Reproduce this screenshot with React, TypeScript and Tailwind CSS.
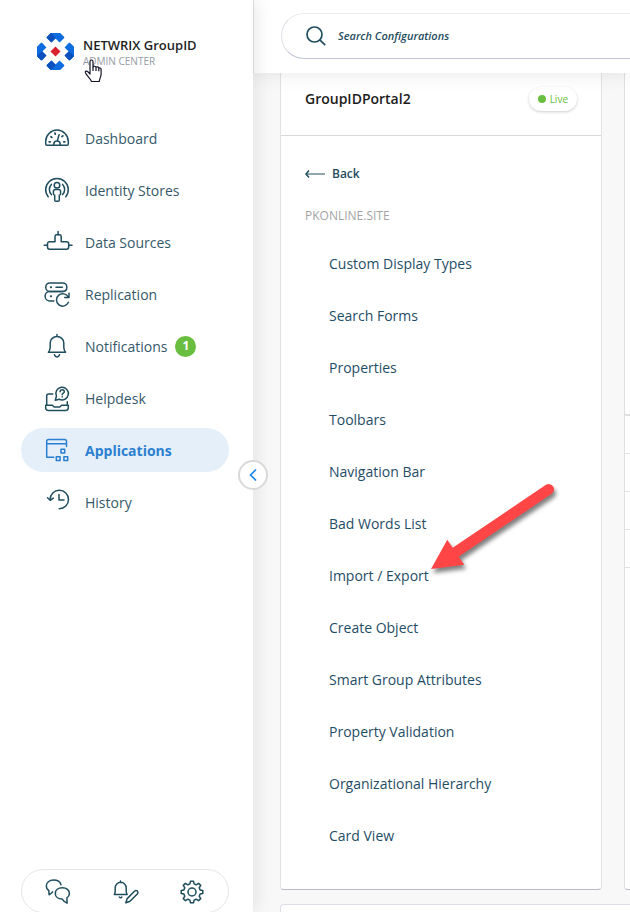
import type { ReactNode } from "react";

const DashboardIcon = () => (
  <>
    <path d="M4 21.3h20c.8 0 1.3-.5 1.3-1.3v-2.600a11.300 11.300 0 0 0-22.600 0V20c0 .8.5 1.300 1.300 1.300Z" />
    <path d="M10.800 21v-.8a3.200 3.200 0 0 1 6.400 0v.8M14.200 17l1.900-6.300" />
    <path d="M6.200 17.800h1M8 12.800l.8.6M12 9.200l.3.900M19 12.500l.8-.6M20.800 17.800h1" strokeWidth="1.8" />
  </>
);

const IdentityIcon = () => (
  <>
    <path d="M5.200 20.800a11.300 11.300 0 1 1 17.600 0" />
    <path d="M8.400 18.600a7.400 7.400 0 0 1 0-10.200M19.600 18.600a7.400 7.400 0 0 0 0-10.200" />
    <circle cx="14" cy="9.3" r="2.8" />
    <path d="M12.600 13.400h2.800c1.400 0 2.200.9 2.200 2.200v1.900c0 .8-.5 1.500-1.300 1.700v4.700c0 .8-.5 1.300-1.200 1.300h-2.200c-.7 0-1.200-.5-1.200-1.300v-4.700c-.8-.2-1.300-.9-1.300-1.700v-1.900c0-1.300.8-2.200 2.200-2.200Z" />
  </>
);

const SourcesIcon = () => (
  <>
    <path d="M12 13.700V8.500c0-1 .6-1.700 1.700-1.700h2.800c1 0 1.700.7 1.700 1.700v5.200h5.300c1.500 0 2.200.8 2.200 2v3.400c0 1.300-.8 2.100-2.200 2.100H6.700c-1.500 0-2.200-.8-2.200-2.100v-3.400c0-1.200.8-2 2.200-2Z" />
    <path d="M15.100 6.600V3.400M4.300 17.200H1.200M25.800 17.200H29" />
  </>
);

const ReplicationIcon = () => (
  <>
    <rect x="2.8" y="2.9" width="21" height="8.6" rx="4" />
    <path d="M6.800 11.500a4.700 4.700 0 0 0 0 9.400h4M13 7.200h6.400M6.800 11.500h13.500c1.800 0 2.800-.7 3.300-2" />
    <path d="M7.800 7.200h.3M7.800 16.200h.3" strokeWidth="2" />
    <path d="M25.300 17.300a6.200 6.200 0 1 0 .1 5M26 13.200v4.300h-4.300" />
  </>
);

const BellIcon = () => (
  <path d="M14 4.600V2.500M5.400 20.300h17.200c-1.300-1.400-1.800-3-1.800-5V11a6.800 6.500 0 0 0-13.600 0v4.300c0 2-.5 3.600-1.800 5ZM11.500 22.700c.4 1.400 1.300 2.200 2.500 2.200s2.100-.8 2.500-2.200" />
);

const HelpdeskIcon = () => (
  <>
    <path d="M9.700 10H5.600c-1.200 0-1.900.7-1.900 1.900v9.200M24.300 17.700v3.400M2.700 21.300h6.700l1.800 1.700h5.600l1.800-1.700h6.700v2.500c0 1.700-1 2.700-2.700 2.700H5.400c-1.700 0-2.700-1-2.700-2.700Z" />
    <path d="m12.300 16.300 1.100-4a6.300 6.300 0 1 1 2.800 2.900Z" />
    <path d="M17.100 7.800c.1-1.300.9-2 2.100-2s2.100.7 2.100 1.900c0 1.500-2.100 1.500-2.100 3.100M19.200 12.800v.2" />
  </>
);

const ApplicationsIcon = () => (
  <>
    <path d="M10.800 21.300H3.700V5.400c0-1.200.7-1.900 1.900-1.900h16c1.200 0 1.900.7 1.900 1.900v5M3.700 7.700h19.800" />
    <rect x="18" y="13.2" width="3.7" height="3.7" />
    <rect x="13.3" y="20.7" width="3.8" height="3.8" />
    <rect x="20.9" y="20.7" width="3.8" height="3.8" />
  </>
);

const HistoryIcon = () => (
  <>
    <path d="M7.100 11.500a9.200 9.200 0 1 1 9.200 9.200M16 6.500V12h5" />
    <path d="m4.500 9.700 2.700 2.600 3.100-2.200" />
  </>
);

const ChatIcon = () => (
  <>
    <path d="M17 7.800c-.8-3-3.500-4.700-7.400-4.700-4.200 0-7.300 2.400-7.300 5.800 0 2.100 1 3.700 2.500 4.800l.3 4.100c1.600-.8 2.700-1.800 3.500-3" />
    <path d="M18.400 10.800c-4.200 0-7.100 2.400-7.100 5.600 0 3.300 2.900 5.500 6.700 5.500 1.300 2.100 3 3.300 5.100 4.200l-.2-5.300c1.600-1.100 2.500-2.500 2.500-4.400 0-3.200-2.900-5.600-7-5.600Z" />
  </>
);

const BellEditIcon = () => (
  <>
    <path d="M9.500 5.500V4M3.300 17.500h12.900c-.9-1-1-2.300-1-3.500v-3.200a5.500 5.500 0 0 0-11 0V14c0 1.200 0 2.500-.9 3.500ZM8.300 20c.4.9 1.900.9 2.500 0" />
    <path d="m14.800 25.800 1.400-4.200 7.500-7.600c1.900-1.500 4.300.6 2.800 2.700L19 24.300l-4.200 1.500Z" />
  </>
);

const GearIcon = () => (
  <>
    <path d="M12.500 4.200h3l.6 2.700 2.100.9 2.400-1.500 2.100 2.100-1.500 2.400.9 2.100 2.700.6v3l-2.700.6-.9 2.100 1.500 2.400-2.100 2.100-2.400-1.500-2.100.9-.6 2.700h-3l-.6-2.700-2.100-.9-2.400 1.500-2.100-2.100 1.500-2.400-.9-2.100-2.700-.6v-3l2.700-.6.9-2.100-1.500-2.400 2.100-2.100 2.400 1.500 2.100-.9Z" />
    <circle cx="14" cy="15" r="4" />
  </>
);

function Icon({ children }: { children: ReactNode }) {
  return (
    <svg
      viewBox="0 0 28 28"
      className="size-7 shrink-0 overflow-visible"
      fill="none"
      stroke="currentColor"
      strokeWidth="1.5"
      strokeLinecap="round"
      strokeLinejoin="round"
      aria-hidden="true"
    >
      {children}
    </svg>
  );
}

const navItems = [
  { label: "Dashboard", icon: <DashboardIcon /> },
  { label: "Identity Stores", icon: <IdentityIcon /> },
  { label: "Data Sources", icon: <SourcesIcon /> },
  { label: "Replication", icon: <ReplicationIcon /> },
  { label: "Notifications", icon: <BellIcon />, count: 1 },
  { label: "Helpdesk", icon: <HelpdeskIcon /> },
  { label: "Applications", icon: <ApplicationsIcon />, active: true },
  { label: "History", icon: <HistoryIcon /> },
];

const settings = [
  "Custom Display Types",
  "Search Forms",
  "Properties",
  "Toolbars",
  "Navigation Bar",
  "Bad Words List",
  "Import / Export",
  "Create Object",
  "Smart Group Attributes",
  "Property Validation",
  "Organizational Hierarchy",
  "Card View",
];

function Logo() {
  const leftHalf = "M-26-43-14-55-10-51 1-40-12-27-26-40Z";
  const rightHalf = "M26-43 14-55 10-51-1-40 12-27 26-40Z";
  return (
    <svg viewBox="-55 -55 110 110" className="size-[37px] shrink-0" aria-hidden="true">
      {[0, 90, 180, 270].map((angle) => (
        <g key={angle} transform={`rotate(${angle})`}>
          <path d="M-26-43-14-55H14L26-43V-40L12-27 0-39-12-27-26-40Z" fill="#0c6ce0" />
          <path d={angle === 0 || angle === 270 ? leftHalf : rightHalf} fill="#0b50bd" />
        </g>
      ))}
      <path d="M0-15 15 0 0 15-15 0Z" fill="#d8232f" />
    </svg>
  );
}

function HandPointer() {
  return (
    <svg viewBox="0 0 18 24" className="absolute top-[26px] left-px h-6 w-[18px]" aria-hidden="true">
      <path
        d="M6 14V2.500c0-2 3-2 3 0V8c.5-1.200 2.800-1 3 .5.7-1 2.700-.7 2.800.7.8-.7 2.300-.3 2.300 1.100V15c0 3-1.500 4-1.800 7.500H7.500C6.500 19.500 3 17 1.500 14c-.8-2 1-2.500 2.300-1.300L6 15Z"
        fill="#fff"
        stroke="#15152a"
        strokeWidth="1.2"
        strokeLinejoin="round"
      />
      <path d="M9 8v4M12 8.500V12M14.800 9.300v3" stroke="#15152a" strokeWidth="1.2" />
    </svg>
  );
}

function CalloutArrow() {
  return (
    <svg
      viewBox="424 478 136 104"
      className="pointer-events-none absolute -top-[72px] left-24 h-[104px] w-[136px] drop-shadow-[2px_4px_2px_rgba(0,0,0,0.5)]"
      aria-hidden="true"
    >
      <path
        d="M430 569 446.300 539.700 451.700 547.700 545 484.800A5.300 5.300 0 0 1 551 493.500L457.700 556.700 463.300 564.700Z"
        fill="#ff4545"
      />
    </svg>
  );
}

function Sidebar() {
  return (
    <aside className="relative z-20 flex w-[253px] shrink-0 flex-col bg-white px-[21px] shadow-[2px_0_18px_rgba(0,20,30,0.1)]">
      <div className="flex h-[116px] items-start gap-[9px] pt-[33px] pl-4">
        <Logo />
        <div className="relative pt-[3px]">
          <p className="text-[13px] leading-[18px] font-semibold text-[#1f1f1f]">NETWRIX GroupID</p>
          <p className="text-[10px] leading-[14px] text-[#959ba5]">ADMIN CENTER</p>
          <HandPointer />
        </div>
      </div>
      <nav aria-label="Main" className="flex flex-col gap-2 pr-[3px]">
        {navItems.map(({ label, icon, count, active }) => (
          <a
            key={label}
            href="#"
            aria-current={active ? "page" : undefined}
            className={`flex h-11 items-center rounded-full pl-[22px] text-sm ${
              active ? "bg-[#e5eff9] font-bold text-[#2b7fd0]" : "text-[#1f4d5e]"
            }`}
          >
            <Icon>{icon}</Icon>
            <span className={`ml-[14px] pt-0.5 ${active ? "" : "text-[#35596a]"}`}>{label}</span>
            {count && (
              <span className="ml-2 flex size-[21px] items-center justify-center rounded-full bg-[#69be3f] text-xs font-bold text-white">
                {count}
              </span>
            )}
          </a>
        ))}
      </nav>
      <div className="mt-auto mr-[3px] -mb-px flex h-11 items-center justify-between rounded-full border border-[#e6e6e6] px-[22px] text-[#1f4d5e]">
        <button type="button" aria-label="Chat"><Icon><ChatIcon /></Icon></button>
        <button type="button" aria-label="Notification settings"><Icon><BellEditIcon /></Icon></button>
        <button type="button" aria-label="Settings"><Icon><GearIcon /></Icon></button>
      </div>
      <button
        type="button"
        aria-label="Collapse sidebar"
        className="absolute top-[460px] -right-[15px] flex size-[30px] items-center justify-center rounded-full border-2 border-[#d9d9d9] bg-white text-[#1683f2]"
      >
        <svg viewBox="0 0 12 14" className="h-[14px] w-3" fill="none" stroke="currentColor" strokeWidth="1.6" aria-hidden="true">
          <path d="M9 1.500 3.500 7 9 12.500" />
        </svg>
      </button>
    </aside>
  );
}

function Header() {
  return (
    <header className="relative z-10 h-[73px] shrink-0 border-l border-[#e3e3e3] bg-white pt-[13px] pl-[27px] shadow-[0_4px_16px_rgba(0,0,0,0.07)]">
      <div className="flex h-[46px] items-center rounded-l-full border-t border-b border-l border-t-[#ececec] border-b-[#bfc3d4] border-l-[#dcdde4] pl-6 text-[#1f4d5e]">
        <svg viewBox="0 0 20 20" className="size-5 shrink-0" fill="none" stroke="currentColor" strokeWidth="1.7" aria-hidden="true">
          <circle cx="8.5" cy="8.5" r="7.5" />
          <path d="m13.800 13.800 5.400 5.400" />
        </svg>
        <input
          type="search"
          aria-label="Search Configurations"
          placeholder="Search Configurations"
          className="ml-3 min-w-0 flex-1 bg-transparent text-[11px] font-semibold italic outline-none placeholder:text-[#1f4d5e] placeholder:opacity-100"
        />
      </div>
    </header>
  );
}

function PortalCard() {
  return (
    <section className="w-[322px] shrink-0 rounded-b border border-t-0 border-[#e2e2e6] border-b-[#b9bbc9] bg-white">
      <div className="flex h-[63px] items-center justify-between border-b border-[#d9d9d9] px-6 pb-[10px]">
        <h1 className="text-sm font-semibold text-[#1c1c1c]">GroupIDPortal2</h1>
        <span className="flex h-6 items-center gap-1 rounded-full px-[9px] text-[10px] text-[#69be3f] shadow-[0_1px_3px_rgba(0,0,0,0.2)]">
          <span className="size-2 rounded-full bg-[#69be3f]" />
          Live
        </span>
      </div>
      <div className="pt-7 pb-[27px] pl-6">
        <a href="#" className="flex h-5 w-fit items-center gap-[7px] text-xs font-semibold text-[#1f4d5e]">
          <svg viewBox="0 0 20 8" className="h-2 w-5" fill="none" stroke="currentColor" aria-hidden="true">
            <path d="M1 4h19" />
            <path d="M4 .5 1 4l3 3.500" strokeWidth="1.5" />
          </svg>
          Back
        </a>
        <h2 className="mt-[22px] text-xs leading-5 text-[#a3a3a3]">PKONLINE.SITE</h2>
        <ul className="mt-3 pl-6">
          {settings.map((label) => (
            <li key={label} className="relative flex h-[52px] items-center">
              <a href="#" className="text-sm text-[#1f4d66]">{label}</a>
              {label === "Import / Export" && <CalloutArrow />}
            </li>
          ))}
        </ul>
      </div>
    </section>
  );
}

function DetailCard() {
  return (
    <section aria-label="Details" className="min-w-0 flex-1 rounded-bl border-b border-l border-[#e0e0e3] border-b-[#b9bbc9] bg-white pt-[341px]">
      <div className="border-t-2 border-[#e0e0e0]" />
      {[1, 2, 3, 4].map((row) => (
        <div key={row} className="h-[38px] border-b border-[#e0e0e0]" />
      ))}
    </section>
  );
}

export default function App() {
  return (
    <div className="flex h-screen overflow-hidden bg-[#f8f8f8] font-['Open_Sans','Noto_Sans',sans-serif]">
      <Sidebar />
      <div className="flex min-w-0 flex-1 flex-col">
        <Header />
        <main className="min-h-0 flex-1 overflow-hidden pl-[27px]">
          <div className="flex gap-[22px]">
            <PortalCard />
            <DetailCard />
          </div>
          <div className="mt-[14px] h-16 rounded-tl border-t border-l border-[#dcdce6] bg-white" />
        </main>
      </div>
    </div>
  );
}
